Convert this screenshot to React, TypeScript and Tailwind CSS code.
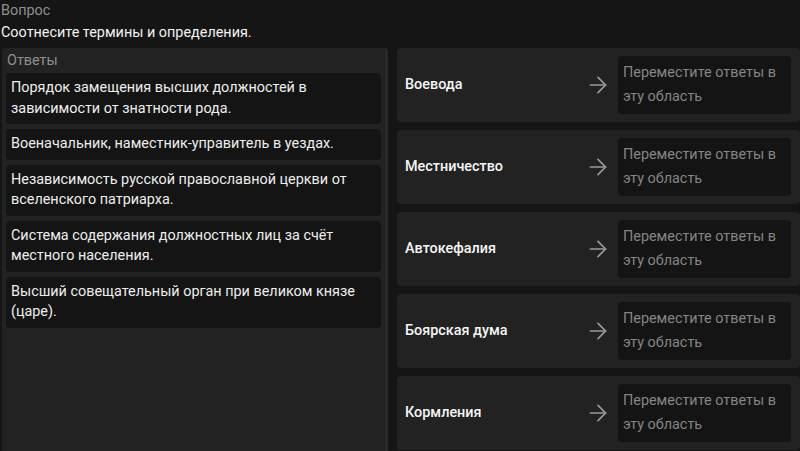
import { ArrowRight } from "lucide-react";

const answers = [
  "Порядок замещения высших должностей в зависимости от знатности рода.",
  "Военачальник, наместник-управитель в уездах.",
  "Независимость русской православной церкви от вселенского патриарха.",
  "Система содержания должностных лиц за счёт местного населения.",
  "Высший совещательный орган при великом князе (царе).",
];

const terms = ["Воевода", "Местничество", "Автокефалия", "Боярская дума", "Кормления"];

function App() {
  return (
    <div
      className="w-[800px] h-[451px] overflow-hidden bg-[#151515] text-[14.4px] text-[#e8e8e8]"
      style={{ fontFamily: "Roboto, 'Liberation Sans', sans-serif" }}
    >
      <div className="px-[1px] pt-[1px] leading-[20px] text-[#8f8f8f]">Вопрос</div>
      <div className="px-[1px] pt-[2px] leading-[20px] text-[#f2f2f2]">
        Соотнесите термины и определения.
      </div>
      <div className="flex mt-[5px] gap-[9px]">
        <div className="ml-[2px] w-[386px] h-[403px] rounded-t-[4px] bg-[#222222] border-r-[3px] border-[#2a2a2a] px-[4px] pt-[4px]">
          <div className="pl-[1px] leading-[18px] text-[#8f8f8f]">Ответы</div>
          <div className="mt-[3px] flex flex-col gap-[5px]">
            {answers.map((a) => (
              <div
                key={a}
                className="rounded-[4px] bg-[#141414] px-[5px] py-[5px] leading-[20.5px] text-[#eeeeee]"
              >
                {a}
              </div>
            ))}
          </div>
        </div>
        <div className="flex-1 flex flex-col gap-[8px]">
          {terms.map((t) => (
            <div key={t} className="flex items-center h-[74px] rounded-[4px] bg-[#222222] pl-[8px] pr-[9px]">
              <div className="flex-1 font-medium text-[#f5f5f5]">{t}</div>
              <ArrowRight size={26} strokeWidth={1.6} className="text-[#9a9a9a]" />
              <div className="ml-[7px] w-[173px] h-[58px] rounded-[4px] bg-[#141414] px-[5px] py-[5px] leading-[24px] text-[#858585]">
                Переместите ответы в эту область
              </div>
            </div>
          ))}
        </div>
      </div>
    </div>
  );
}

export default App;
